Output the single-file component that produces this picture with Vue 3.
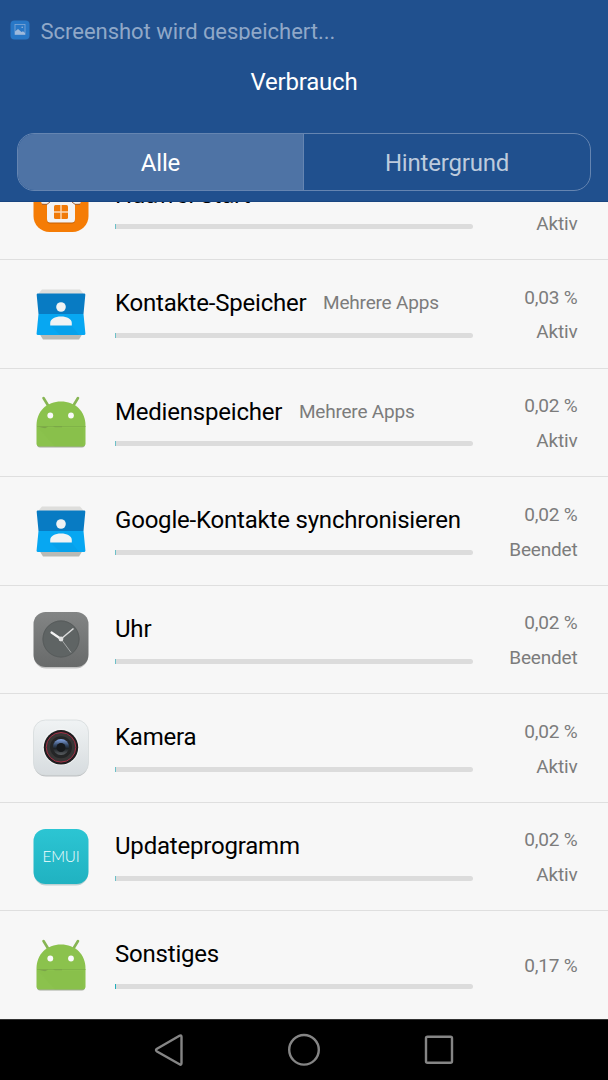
<template>
  <div class="screen">
    <header class="header">
      <div class="ticker">
        <svg class="ticker-icon" viewBox="0 0 20 20">
          <rect x="0.5" y="0.5" width="19" height="19" rx="4" fill="#2877c6" />
          <rect x="5" y="4.5" width="10" height="10" fill="none" stroke="#83a9d5" stroke-width="0.8" />
          <path d="M5 11.500 L8 9 L11.5 12 L13 11.3 L15 13 V14.500 H5Z" fill="#9db9dc" />
          <circle cx="12.2" cy="7.2" r="0.8" fill="#9db9dc" />
        </svg>
        <span class="ticker-text">Screenshot wird gespeichert...</span>
      </div>
      <h1 class="title">Verbrauch</h1>
      <div class="tabs">
        <button
          v-for="tab in tabs"
          :key="tab"
          class="tab"
          :class="{ active: tab === activeTab }"
          @click="activeTab = tab"
        >{{ tab }}</button>
      </div>
    </header>

    <!-- Usage list, scrolled to its end -->
    <main class="list">
      <div v-for="app in apps" :key="app.name" class="row">
        <div class="icon-cell">
          <svg v-if="app.icon === 'home'" class="icon" viewBox="0 0 56 58">
            <rect x="0.5" y="1" width="55" height="55" rx="16" fill="#f57c05" />
            <path d="M28 10 L48 28 H42 V44 Q42 47.500 39 47.500 H17 Q14 47.500 14 44 V28 H8Z" fill="#c55e04" />
            <path d="M28 9 L47.500 26 Q48.500 28 45 28 H42 V43 Q42 46.500 39 46.500 H17 Q14 46.500 14 43 V28 H11 Q7.500 28 8.500 26Z" fill="#f3f3f3" />
            <path d="M9 28.300 H14 L17 26 M47 28.300 H42 L39 26" fill="none" stroke="#9b5f38" />
            <rect x="21" y="29" width="14" height="14" rx="1.5" fill="#f07a08" />
            <path d="M28 29 V43 M21 36 H35" stroke="#fbd9b5" stroke-width="1.4" />
          </svg>

          <svg v-else-if="app.icon === 'contacts'" class="icon" viewBox="0 0 56 58">
            <path d="M9 4.5 H47 L50 8 V11 H6 V8Z" fill="#dededc" />
            <path d="M6 48 H50 L46 54.5 H10Z" fill="#b9bab5" />
            <path d="M4.500 8.500 H51.500 Q52.500 8.500 52.300 10 L50.500 29 H5.500 L3.700 10 Q3.500 8.500 4.500 8.500Z" fill="#087bc3" />
            <path d="M5.500 29 H50.500 L52.400 48.500 Q52.500 50 51 50 H5 Q3.500 50 3.600 48.500Z" fill="#07a7f2" />
            <path d="M17 40 L27 50 H46 L38 40Z" fill="#079be3" opacity="0.5" />
            <circle cx="28" cy="22" r="4.800" fill="#f1f3f4" />
            <path d="M17.200 40.600 V38 C17.200 34 22 31.500 28 31.500 S38.800 34 38.800 38 V40.600Z" fill="#f1f3f4" />
          </svg>

          <svg v-else-if="app.icon === 'android'" class="icon" viewBox="0 0 56 58">
            <path d="M4 30 H52 V51 Q52 54.500 49 54.500 H7 Q4 54.500 4 51Z" fill="#a6aca0" />
            <path d="M10.500 5 L16 14 M45 5 L39.500 14" stroke="#87b554" stroke-width="2.600" stroke-linecap="round" />
            <path d="M3.500 32.500 C3.500 18 14 8.500 28 8.500 S52.500 18 52.500 32.500 V50.500 Q52.500 53.500 49.500 53.500 H6.500 Q3.500 53.500 3.500 50.500Z" fill="#8bc24d" />
            <path d="M4 33.500 H52.500" stroke="#7dae47" stroke-width="0.800" />
            <path d="M5 33.800 H15 L12 35.200Z M20 33.500 H29 V34.200 H22Z" fill="#709048" opacity="0.6" />
            <path d="M5 35 L22 53.500 H50 V35Z" fill="#83ba48" opacity="0.25" />
            <circle cx="17.300" cy="22.500" r="2.900" fill="#fafafa" />
            <circle cx="38" cy="22.500" r="2.900" fill="#fafafa" />
          </svg>

          <svg v-else-if="app.icon === 'clock'" class="icon" viewBox="0 0 56 58">
            <defs>
              <linearGradient id="clock-body" x1="0" y1="0" x2="0" y2="1">
                <stop offset="0" stop-color="#838585" />
                <stop offset="1" stop-color="#686a6a" />
              </linearGradient>
            </defs>
            <rect x="1" y="2.500" width="54" height="55" rx="12" fill="#c3c3c3" />
            <rect x="0.500" y="1" width="55" height="55" rx="12" fill="url(#clock-body)" />
            <circle cx="28" cy="28" r="18.500" fill="#5f6464" />
            <circle cx="28" cy="28" r="18" fill="none" stroke="#585c5c" />
            <path d="M28 28 L38 41.500" stroke="#a5a8a8" stroke-width="1" />
            <path d="M28 28 L40.500 17.500" stroke="#dedede" stroke-width="1.500" />
            <path d="M28 28 L18.500 21.500" stroke="#f4f4f4" stroke-width="2.200" stroke-linecap="round" />
            <circle cx="28" cy="28" r="2.400" fill="#e2e2e2" />
          </svg>

          <svg v-else-if="app.icon === 'camera'" class="icon" viewBox="0 0 56 58">
            <defs>
              <linearGradient id="camera-body" x1="0" y1="0" x2="0" y2="1">
                <stop offset="0" stop-color="#f0f3f4" />
                <stop offset="1" stop-color="#d7dcdf" />
              </linearGradient>
              <linearGradient id="camera-glass" x1="0" y1="0" x2="0" y2="1">
                <stop offset="0" stop-color="#86a7e6" />
                <stop offset="0.400" stop-color="#31435f" />
                <stop offset="0.600" stop-color="#1d2125" />
                <stop offset="1" stop-color="#5c6064" />
              </linearGradient>
            </defs>
            <rect x="1" y="2.500" width="54" height="55" rx="12" fill="#bfc2c4" />
            <rect x="0.500" y="1" width="55" height="55" rx="12" fill="url(#camera-body)" stroke="#d6dadc" stroke-width="0.800" />
            <circle cx="28" cy="28" r="18.500" fill="#f2f4f5" />
            <circle cx="28" cy="28.300" r="17.200" fill="#1e1d1f" />
            <circle cx="28" cy="28.300" r="14.800" fill="#373636" stroke="#a62f45" stroke-width="1" />
            <circle cx="28" cy="28.300" r="11" fill="#242526" />
            <circle cx="28" cy="28" r="8" fill="url(#camera-glass)" />
            <circle cx="28" cy="28.500" r="4.500" fill="#17191c" />
          </svg>

          <svg v-else class="icon" viewBox="0 0 56 58">
            <defs>
              <linearGradient id="emui-body" x1="0" y1="0" x2="0" y2="1">
                <stop offset="0" stop-color="#2cc5d3" />
                <stop offset="1" stop-color="#20b2c1" />
              </linearGradient>
            </defs>
            <rect x="1" y="2.500" width="54" height="55" rx="12" fill="#bed1d3" />
            <rect x="0.500" y="1" width="55" height="55" rx="12" fill="url(#emui-body)" />
            <text x="9.500" y="34" textLength="37" lengthAdjust="spacingAndGlyphs" class="emui-text">EMUI</text>
          </svg>
        </div>

        <div class="info">
          <div class="name-line">
            <span class="name">{{ app.name }}</span>
            <span v-if="app.note" class="note">{{ app.note }}</span>
          </div>
          <div class="bar">
            <div class="bar-fill" :style="{ opacity: app.level }"></div>
          </div>
        </div>

        <div class="usage">
          <span>{{ app.percent }}</span>
          <span v-if="app.status">{{ app.status }}</span>
        </div>
      </div>
    </main>

    <nav class="navbar">
      <svg class="nav-icon" viewBox="0 0 36 36">
        <path d="M30.500 5 V31 Q30.500 33.500 28.500 32.300 L6 19.500 Q4 18 6 16.700 L28.500 3.700 Q30.500 2.600 30.500 5Z" />
      </svg>
      <svg class="nav-icon" viewBox="0 0 36 36">
        <circle cx="18" cy="17.800" r="14.800" />
      </svg>
      <svg class="nav-icon" viewBox="0 0 36 36">
        <rect x="5" y="4.700" width="26" height="26" rx="1.500" />
      </svg>
    </nav>
  </div>
</template>

<script setup>
import { ref } from 'vue';

const tabs = ['Alle', 'Hintergrund'];
const activeTab = ref('Alle');

// level: strength of the sliver at the start of the bar
const apps = [
  { name: 'Huawei Start', icon: 'home', percent: '0,03 %', status: 'Aktiv', level: 0.6 },
  { name: 'Kontakte-Speicher', note: 'Mehrere Apps', icon: 'contacts', percent: '0,03 %', status: 'Aktiv', level: 0.6 },
  { name: 'Medienspeicher', note: 'Mehrere Apps', icon: 'android', percent: '0,02 %', status: 'Aktiv', level: 0.6 },
  { name: 'Google-Kontakte synchronisieren', icon: 'contacts', percent: '0,02 %', status: 'Beendet', level: 0.6 },
  { name: 'Uhr', icon: 'clock', percent: '0,02 %', status: 'Beendet', level: 0.6 },
  { name: 'Kamera', icon: 'camera', percent: '0,02 %', status: 'Aktiv', level: 0.6 },
  { name: 'Updateprogramm', icon: 'emui', percent: '0,02 %', status: 'Aktiv', level: 0.6 },
  { name: 'Sonstiges', icon: 'android', percent: '0,17 %', level: 1 }
];
</script>

<style>
body {
  margin: 0;
}
</style>

<style scoped>
.screen {
  display: flex;
  flex-direction: column;
  width: 608px;
  height: 1080px;
  overflow: hidden;
  background-color: #f7f7f7;
  font-family: Roboto, "Liberation Sans", sans-serif;
  letter-spacing: -0.2px;
}

.header {
  flex: none;
  box-sizing: border-box;
  height: 202px;
  background-color: #20508e;
  border-bottom: 1px solid #194580;
}

.ticker {
  display: flex;
  box-sizing: border-box;
  height: 40px;
  padding: 20px 0 0 10px;
  overflow: hidden;
}

.ticker-icon {
  flex: none;
  width: 20px;
  height: 20px;
}

.ticker-text {
  margin-left: 10.500px;
  font-size: 22px;
  line-height: 23px;
  letter-spacing: -0.030px;
  color: #90a8c8;
  white-space: nowrap;
}

.title {
  margin: 27px 0 0;
  font-size: 24px;
  font-weight: 400;
  line-height: 30px;
  text-align: center;
  color: #fff;
}

.tabs {
  display: flex;
  box-sizing: border-box;
  height: 58px;
  margin: 36px 17px 0;
  border: 1px solid #6585b1;
  border-radius: 17px;
  overflow: hidden;
}

.tab {
  flex: 0 0 50%;
  box-sizing: border-box;
  padding: 2px 0 0;
  border: none;
  background: none;
  font-family: inherit;
  font-size: 24px;
  letter-spacing: inherit;
  color: #bdcbdd;
}

.tab.active {
  background-color: #4e73a5;
  border-right: 1px solid #6585b1;
  color: #fff;
}

.list {
  display: flex;
  flex: 1;
  flex-direction: column;
  justify-content: flex-end;
  min-height: 0;
  overflow: hidden;
}

.row {
  display: flex;
  flex: none;
  box-sizing: border-box;
  height: 108.550px;
  padding: 0 30.600px 0 33px;
  border-bottom: 1px solid #dfdfdf;
}

.row:last-child {
  margin-bottom: -1px;
  border-bottom-color: transparent;
}

.icon-cell {
  display: flex;
  align-items: center;
  width: 82px;
}

.icon {
  width: 56px;
  height: 58px;
}

.emui-text {
  font-family: Lato, sans-serif;
  font-size: 15px;
  font-weight: 300;
  fill: #f4fdfe;
}

.info {
  width: 358px;
  padding-top: 28px;
}

.name-line {
  display: flex;
  align-items: center;
  height: 30px;
  white-space: nowrap;
}

.name {
  font-size: 24px;
  color: #000;
}

.note {
  margin: 0 0 1px 16.600px;
  font-size: 19px;
  color: #7c7c7c;
}

.bar {
  height: 5px;
  margin-top: 14.700px;
  border-radius: 0 3px 3px 0;
  background-color: #dcdcdc;
  overflow: hidden;
}

.bar-fill {
  width: 1px;
  height: 5px;
  background-color: #21aebb;
}

.usage {
  display: flex;
  flex: 1;
  flex-direction: column;
  align-items: flex-end;
  justify-content: center;
  padding-top: 3px;
  font-size: 19px;
  line-height: 34.800px;
  color: #7c7c7c;
}

.navbar {
  display: flex;
  flex: none;
  align-items: center;
  justify-content: center;
  gap: 99px;
  box-sizing: border-box;
  height: 61px;
  border-top: 1px solid #333;
  background-color: #000;
}

.nav-icon {
  width: 36px;
  height: 36px;
  fill: none;
  stroke: #858585;
  stroke-width: 2.400;
}
</style>
